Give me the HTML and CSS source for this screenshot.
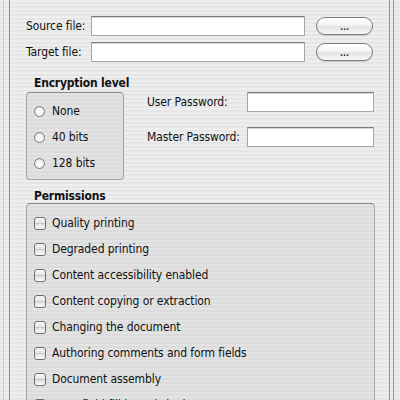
FILE: index.html
```html
<!DOCTYPE html>
<html>
<head>
<meta charset="utf-8">
<link rel="stylesheet" href="styles.css">
</head>
<body>
<div class="win">
  <div class="pane">
    <div class="files">
      <span class="lbl">Source file:</span>
      <span class="field"></span>
      <span class="pill">...</span>
      <span class="lbl">Target file:</span>
      <span class="field"></span>
      <span class="pill">...</span>
    </div>

    <div class="middle">
      <div class="enc">
        <div class="head">Encryption level</div>
        <div class="box encbox">
          <div class="opt"><span class="radio"></span><span>None</span></div>
          <div class="opt"><span class="radio"></span><span>40 bits</span></div>
          <div class="opt"><span class="radio"></span><span>128 bits</span></div>
        </div>
      </div>
      <div class="pw">
        <div class="pwrow"><span class="lbl pwl">User Password:</span><span class="field pwf"></span></div>
        <div class="pwrow"><span class="lbl pwl">Master Password:</span><span class="field pwf"></span></div>
      </div>
    </div>

    <div class="head">Permissions</div>
    <div class="box permbox">
      <div class="opt"><span class="check"></span><span>Quality printing</span></div>
      <div class="opt"><span class="check"></span><span>Degraded printing</span></div>
      <div class="opt"><span class="check"></span><span>Content accessibility enabled</span></div>
      <div class="opt"><span class="check"></span><span>Content copying or extraction</span></div>
      <div class="opt"><span class="check"></span><span>Changing the document</span></div>
      <div class="opt"><span class="check"></span><span>Authoring comments and form fields</span></div>
      <div class="opt"><span class="check"></span><span>Document assembly</span></div>
      <div class="opt"><span class="check"></span><span>Form field fill-in and signing</span></div>
    </div>
  </div>
</div>
</body>
</html>
```

FILE: styles.css
```css
html, body {
  margin: 0;
  padding: 0;
  width: 400px;
  height: 400px;
  overflow: hidden;
}
body {
  font-family: "DejaVu Sans Condensed", "DejaVu Sans", sans-serif;
  font-stretch: condensed;
  font-size: 12px;
  color: #111;
  background: repeating-linear-gradient(to bottom, #eeeeee 0, #eeeeee 2px, #e6e6e6 2px, #e6e6e6 4px);
}
.win {
  margin-left: 3px;
  width: 389px;
  height: 400px;
  border-left: 1px solid #c8c8c8;
  border-right: 1px solid #9a9a9a;
  display: flex;
}
.pane {
  margin-left: 5px;
  width: 363px;
  height: 400px;
  border-left: 1px solid #8e8e8e;
  border-right: 1px solid #8e8e8e;
  padding: 16px 0 0 16px;
  overflow: hidden;
}

.files {
  display: grid;
  grid-template-columns: 65px 214px 68px;
  row-gap: 6px;
  align-items: center;
}
.lbl { line-height: 14px; white-space: nowrap; letter-spacing: -0.1px; }
.field {
  display: block;
  height: 20px;
  box-sizing: border-box;
  background: #fff;
  border: 1px solid #a8a8a8;
  border-top-color: #7c7c7c;
  box-shadow: inset 0 1px 0 #d8d8d8;
}
.pill {
  margin-left: 11px;
  width: 57px;
  height: 18px;
  box-sizing: border-box;
  border: 1px solid #7d7d7d;
  border-radius: 9px;
  background: linear-gradient(to bottom, #ffffff 0%, #f4f4f4 45%, #e2e2e2 55%, #f8f8f8 100%);
  box-shadow: 0 1px 1px rgba(0,0,0,0.15);
  text-align: center;
  font-size: 9px;
  line-height: 18px;
  font-weight: bold;
  color: #333;
}

.head {
  font-weight: bold;
  line-height: 14px;
  padding-left: 8px;
  white-space: nowrap;
  letter-spacing: -0.2px;
}
.middle {
  display: flex;
  align-items: flex-start;
  margin-top: 14px;
}
.enc { width: 98px; flex: none; }
.box {
  background: repeating-linear-gradient(to bottom, #e3e3e3 0, #e3e3e3 2px, #dcdcdc 2px, #dcdcdc 4px);
  border: 1px solid #a3a3a3;
  border-top-color: #8a8a8a;
  border-radius: 4px;
  box-sizing: border-box;
}
.encbox {
  margin-top: 2px;
  height: 88px;
  padding-top: 5px;
}
.opt {
  display: flex;
  align-items: center;
  height: 26px;
  padding-left: 7px;
  white-space: nowrap;
  letter-spacing: -0.1px;
}
.radio {
  width: 11px;
  height: 11px;
  box-sizing: border-box;
  border-radius: 50%;
  border: 1px solid #7a7a7a;
  background: radial-gradient(circle at 50% 60%, #ffffff 0%, #f3f3f3 50%, #cfcfcf 100%);
  margin-right: 7px;
  flex: none;
}
.check {
  width: 12px;
  height: 13px;
  box-sizing: border-box;
  border-radius: 3px;
  border: 1px solid #6f6f6f;
  background: linear-gradient(to bottom, #f6f6f6 0%, #e8e8e8 42%, #c8c8c8 50%, #e2e2e2 58%, #fbfbfb 100%);
  margin-right: 6px;
  flex: none;
}
.pw {
  margin-left: 23px;
  padding-top: 16px;
  display: flex;
  flex-direction: column;
  gap: 15px;
}
.pwrow {
  display: flex;
  align-items: center;
}
.pwl { width: 100px; }
.pwf { width: 127px; }

.middle + .head { margin-top: 9px; }
.permbox {
  width: 349px;
  height: 260px;
  padding-top: 6px;
  border-bottom: none;
}
```
